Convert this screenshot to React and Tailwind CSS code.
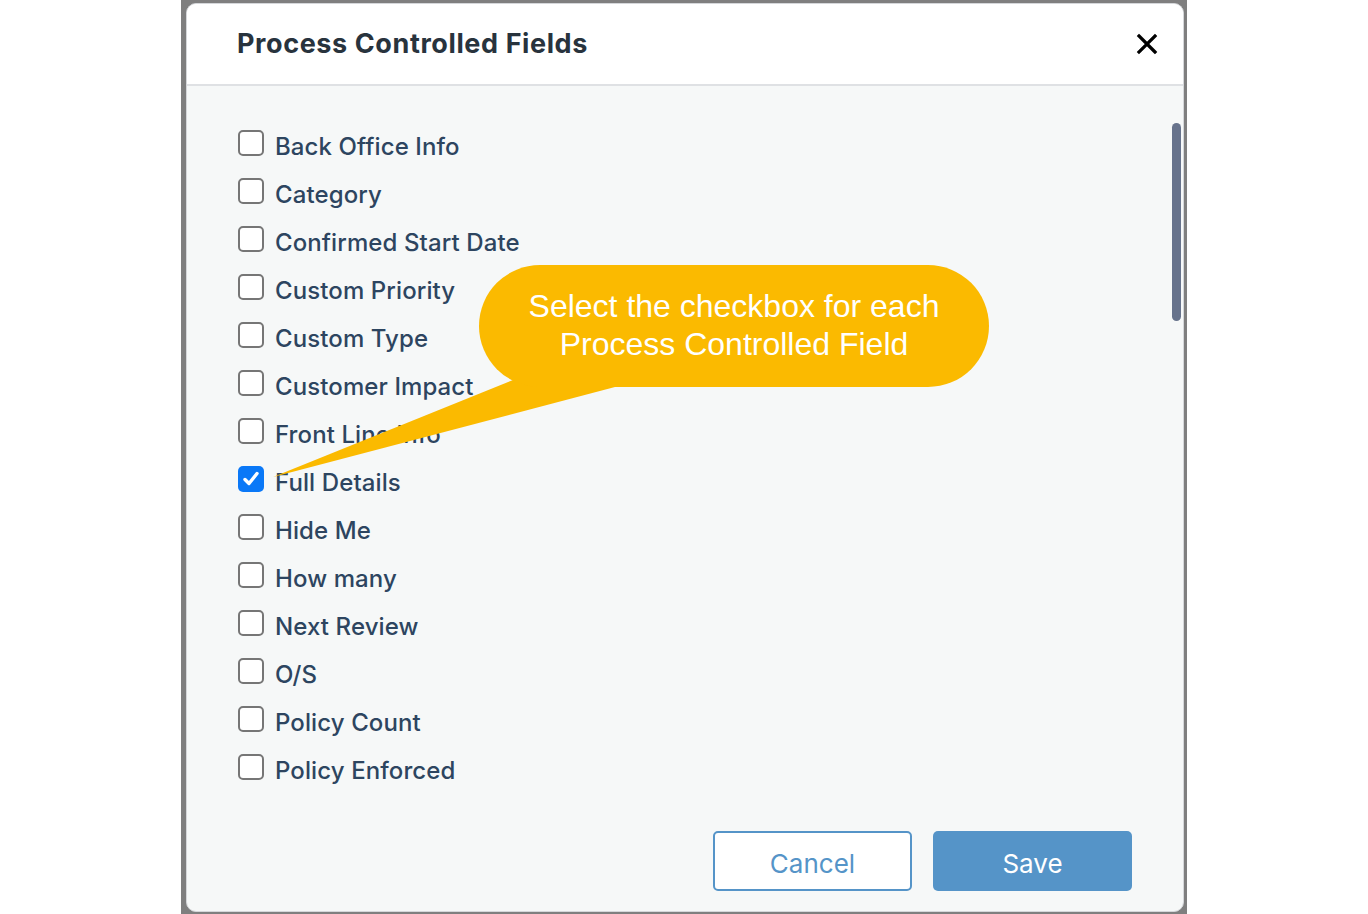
import React from "react";

const items = [
  "Back Office Info",
  "Category",
  "Confirmed Start Date",
  "Custom Priority",
  "Custom Type",
  "Customer Impact",
  "Front Line Info",
  "Full Details",
  "Hide Me",
  "How many",
  "Next Review",
  "O/S",
  "Policy Count",
  "Policy Enforced",
];

function Checkbox({ checked }) {
  if (checked) {
    return (
      <span className="flex h-[26px] w-[26px] shrink-0 items-center justify-center rounded-[5px] bg-[#0a78f7]">
        <svg width="20" height="20" viewBox="0 0 20 20" fill="none">
          <path d="M4 10.5 L8 14.5 L16 4.5" stroke="white" strokeWidth="3.4" strokeLinecap="round" strokeLinejoin="round" />
        </svg>
      </span>
    );
  }
  return <span className="block h-[26px] w-[26px] shrink-0 rounded-[5px] border-2 border-[#767676] bg-white" />;
}

export default function App() {
  return (
    <div className="relative flex h-[914px] w-full justify-center overflow-hidden bg-white" style={{ fontFamily: "Inter, 'Noto Sans', sans-serif" }}>
      <div className="flex h-[914px] w-[1006px] flex-col bg-[#7f7f7f] pl-[5px] pr-[3px] pt-[3px] pb-[2px]">
        <div className="relative flex flex-1 flex-col overflow-hidden rounded-[10px] border border-[#d5d7da] bg-[#f6f8f8]">
          <div className="flex h-[82px] shrink-0 items-center justify-between border-b-2 border-[#dfe1e4] bg-white pl-[50px] pr-[24px]">
            <h1 className="text-[27px] font-bold tracking-[0.6px] text-[#28333d]">Process Controlled Fields</h1>
            <svg width="22" height="22" viewBox="0 0 22 22" className="mr-[1px]">
              <path d="M3 3 L19 19 M19 3 L3 19" stroke="#000" strokeWidth="3.2" strokeLinecap="square" />
            </svg>
          </div>
          <div className="flex flex-1 flex-col pl-[51px] pt-[37px]">
            {items.map((it) => (
              <label key={it} className="flex h-[48px] items-center gap-[11px]">
                <span className="-mt-[8px] block"><Checkbox checked={it === "Full Details"} /></span>
                <span className="text-[24px] font-medium tracking-[0.1px] text-[#2d4560]">{it}</span>
              </label>
            ))}
          </div>
          <div className="flex shrink-0 justify-end gap-[21px] pb-[20px] pr-[51px]">
            <button className="h-[60px] w-[199px] rounded-[5px] border-2 border-[#5594c8] bg-white pt-[4px] text-[26px] text-[#5594c8]">Cancel</button>
            <button className="h-[60px] w-[199px] rounded-[5px] bg-[#5594c8] pt-[4px] text-[26px] text-white">Save</button>
          </div>
          <div className="absolute right-[2px] top-[119px] h-[198px] w-[9px] rounded-full bg-[#67738c]" />
        </div>
      </div>

      <svg className="pointer-events-none absolute left-0 top-0" width="1368" height="914">
        <polygon points="513,380 640,380 615,387 273,477" fill="#fbba00" />
      </svg>
      <div
        className="absolute left-[479px] top-[265px] flex h-[122px] w-[510px] flex-col items-center justify-center rounded-[62px] bg-[#fbba00] pb-[3px] text-center text-[32px] leading-[38px] text-white"
        style={{ fontFamily: "'Liberation Sans', Arial, sans-serif" }}
      >
        <span>Select the checkbox for each</span>
        <span>Process Controlled Field</span>
      </div>
    </div>
  );
}
